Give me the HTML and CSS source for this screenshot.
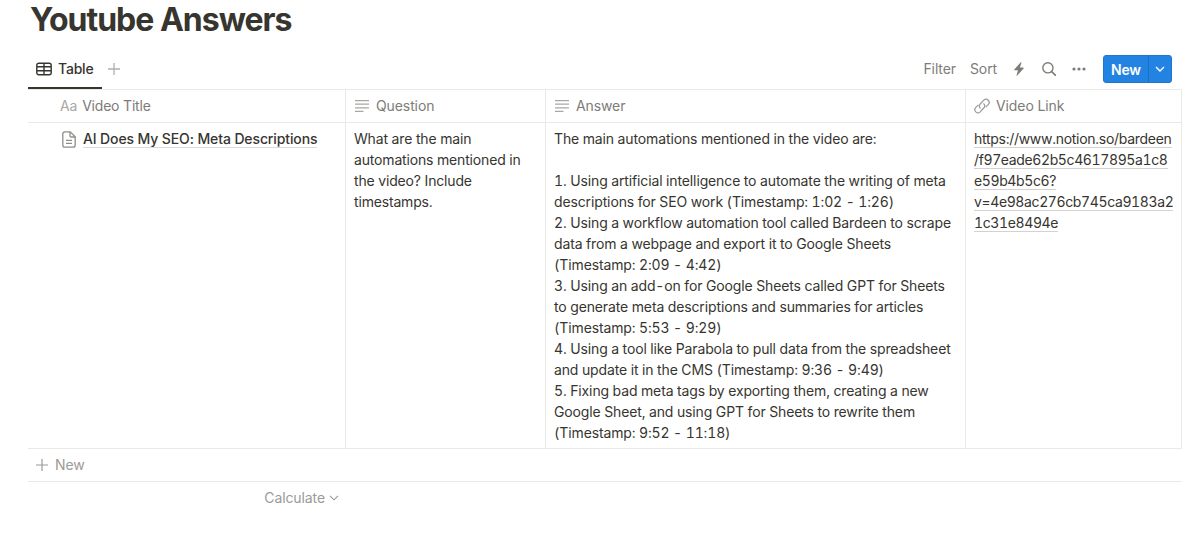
FILE: index.html
```
<!DOCTYPE html>
<html lang="en">
<head>
    <meta charset="UTF-8">
    <meta name="viewport" content="width=device-width, initial-scale=1.0">
    <title>Youtube Answers</title>
    <link rel="stylesheet" href="styles.css">
</head>
<body>

<div class="page">
    <h1>Youtube Answers</h1>

    <!-- View tabs and toolbar -->
    <div class="toolbar">
        <div class="tab">
            <svg width="16" height="14" viewBox="0 0 16 14" fill="none" stroke="currentColor" stroke-width="1.4">
                <rect x="0.8" y="1.2" width="14.4" height="11.6" rx="2"/>
                <path d="M1 4.8h14M1 8.8h14M8 1.2v11.6"/>
            </svg>
            <span class="tab-name">Table</span>
        </div>
        <svg class="add-view" width="12" height="12" viewBox="0 0 12 12" stroke="currentColor" stroke-width="1.3">
            <path d="M6 0v12M0 6h12"/>
        </svg>
        <div class="actions">
            <span class="filter">Filter</span>
            <span class="sort">Sort</span>
            <svg class="bolt" width="10" height="14" viewBox="0 0 10 14" fill="currentColor">
                <path d="M6.8 0.2L0.3 7.5q-.4.7.3.8H4L2.5 13.6q0 .5.5.2L9.6 6.4q.3-.7-.4-.8H5.9L7.5.6q0-.5-.7-.4z"/>
            </svg>
            <svg class="search" width="14" height="14" viewBox="0 0 14 14" fill="none" stroke="currentColor" stroke-width="1.4">
                <circle cx="5.9" cy="5.8" r="5.1"/>
                <path d="M9.6 9.5l3.7 3.7" stroke-width="1.7" stroke-linecap="round"/>
            </svg>
            <svg class="more" width="14" height="4" viewBox="0 0 14 4" fill="currentColor">
                <circle cx="2" cy="2" r="1.6"/><circle cx="7" cy="2" r="1.6"/><circle cx="12" cy="2" r="1.6"/>
            </svg>
            <div class="new-btn">
                <span class="new-label">New</span>
                <span class="new-arrow">
                    <svg width="10" height="6" viewBox="0 0 10 6" fill="none" stroke="currentColor" stroke-width="1.4">
                        <path d="M1 1l4 4 4-4"/>
                    </svg>
                </span>
            </div>
        </div>
    </div>

    <!-- Table -->
    <div class="table">
        <div class="cell head title-head">
            <span class="aa">Aa</span><span>Video Title</span>
        </div>
        <div class="cell head">
            <svg class="lines" width="14" height="12" viewBox="0 0 14 12" stroke="currentColor" stroke-width="1.3">
                <path d="M0 .6h14M0 4.2h14M0 7.8h14M0 11.3h8.5"/>
            </svg>
            <span>Question</span>
        </div>
        <div class="cell head">
            <svg class="lines" width="14" height="12" viewBox="0 0 14 12" stroke="currentColor" stroke-width="1.3">
                <path d="M0 .6h14M0 4.2h14M0 7.8h14M0 11.3h8.5"/>
            </svg>
            <span>Answer</span>
        </div>
        <div class="cell head">
            <svg class="link-icon" width="16" height="16" viewBox="0 0 16 16" fill="none" stroke="currentColor" stroke-width="1.2">
                <path d="M6.6 10.4C5 9.4 4.9 7.3 6.2 6L9.8 2.2a3.1 3.1 0 0 1 4.4 4.4L11.6 9.2"/>
                <path d="M9.4 5.6c1.6 1 1.7 3.1.4 4.4L6.2 13.8a3.1 3.1 0 0 1-4.4-4.4L4.4 6.8"/>
            </svg>
            <span>Video Link</span>
        </div>

        <div class="cell title-cell">
            <svg class="page-icon" width="14" height="17" viewBox="0 0 14 17" fill="none" stroke="currentColor" stroke-width="1.3">
                <path d="M3 .8h5.2l5 5V14a2.2 2.2 0 0 1-2.2 2.2H3A2.2 2.2 0 0 1 .8 14V3A2.2 2.2 0 0 1 3 .8z"/>
                <path d="M8 .8v4a1.2 1.2 0 0 0 1.2 1.2h4M4 9.3h6M4 12.3h6"/>
            </svg>
            <span class="title">AI Does My SEO: Meta Descriptions</span>
        </div>
        <div class="cell question">What are the main automations mentioned in the video? Include timestamps.</div>
        <div class="cell answer">The main automations mentioned in the video are:

1. Using artificial intelligence to automate the writing of meta descriptions for SEO work (Timestamp: 1:02 - 1:26)
2. Using a workflow automation tool called Bardeen to scrape data from a webpage and export it to Google Sheets (Timestamp: 2:09 - 4:42)
3. Using an add-on for Google Sheets called GPT for Sheets to generate meta descriptions and summaries for articles (Timestamp: 5:53 - 9:29)
4. Using a tool like Parabola to pull data from the spreadsheet and update it in the CMS (Timestamp: 9:36 - 9:49)
5. Fixing bad meta tags by exporting them, creating a new Google Sheet, and using GPT for Sheets to rewrite them (Timestamp: 9:52 - 11:18)</div>
        <div class="cell url"><a><span class="host">https://www.notion.so/bardeen</span><br>/f97eade62b5c4617895a1c8<br>e59b4b5c6?<br>v=4e98ac276cb745ca9183a2<br>1c31e8494e</a></div>
    </div>

    <div class="new-row">
        <svg width="12" height="12" viewBox="0 0 12 12" stroke="currentColor" stroke-width="1.2">
            <path d="M6 0v12M0 6h12"/>
        </svg>
        <span>New</span>
    </div>
    <div class="calculate">
        <span>Calculate</span>
        <svg width="10" height="6" viewBox="0 0 10 6" fill="none" stroke="currentColor" stroke-width="1.1">
            <path d="M1 .8l4 4 4-4"/>
        </svg>
    </div>
</div>

</body>
</html>
```
FILE: styles.css
```
body {
    margin: 0;
    background: #fff;
    font-family: Inter, "Liberation Sans", sans-serif;
    font-size: 14px;
    line-height: 21px;
    letter-spacing: -0.1px;
    color: #37352f;
    overflow: hidden;
}
svg {
    display: block;
    flex-shrink: 0;
}
.page {
    padding-left: 28px;
}
h1 {
    margin: 0;
    padding-left: 2px;
    height: 49px;
    font-size: 32px;
    line-height: 40px;
    font-weight: 700;
    letter-spacing: -1px;
}
.toolbar {
    display: flex;
    align-items: center;
    height: 40px;
    border-bottom: 1px solid #e9e9e7;
}
.tab {
    display: flex;
    align-items: center;
    box-sizing: border-box;
    width: 74px;
    height: 40px;
    padding: 1px 0 0 8px;
    border-bottom: 2px solid #37352f;
}
.tab-name {
    margin-left: 6px;
    font-weight: 500;
    letter-spacing: -0.2px;
}
.add-view {
    margin-left: 6px;
    color: #b0afac;
}
.actions {
    display: flex;
    align-items: center;
    margin-left: auto;
    margin-right: 10px;
    color: #7d7c78;
}
.filter,
.sort {
    padding-bottom: 2px;
}
.sort {
    margin-left: 14px;
}
.bolt {
    margin-left: 17px;
}
.search {
    margin-left: 18px;
}
.more {
    margin-left: 16px;
}
.new-btn {
    display: flex;
    box-sizing: border-box;
    width: 69px;
    height: 28px;
    margin-left: 17px;
    border: 1px solid #1f76cb;
    border-radius: 3px;
    background: #2383e2;
    color: #fff;
}
.new-label {
    width: 44px;
    text-align: center;
    line-height: 28px;
    font-weight: 600;
    letter-spacing: -0.2px;
    border-right: 1px solid #1c6fc0;
}
.new-arrow {
    flex: 1;
    display: flex;
    align-items: center;
    justify-content: center;
}
.table {
    display: grid;
    grid-template-columns: 318px 200px 420px 216px;
    grid-template-rows: 33px 326px;
}
.cell {
    box-sizing: border-box;
    padding: 5px 8px 0;
    border-right: 1px solid #e9e9e7;
    border-bottom: 1px solid #e9e9e7;
}
.head {
    display: flex;
    align-items: center;
    padding-top: 0;
    color: #7d7c78;
}
.head span {
    padding-bottom: 1px;
}
.title-head {
    padding-left: 32px;
}
.title-head span {
    letter-spacing: -0.2px;
}
.aa {
    margin-right: 5px;
    color: #a9a8a5;
}
.lines {
    margin: 0 7px 0 1px;
    color: #a9a8a5;
}
.link-icon {
    margin-right: 6px;
    color: #9b9a97;
}
.title-cell {
    display: flex;
    align-items: flex-start;
    padding-left: 34px;
}
.page-icon {
    margin: 3px 7px 0 0;
    color: #8f8e8a;
}
.title {
    font-weight: 500;
    line-height: 17px;
    margin-top: 2px;
    letter-spacing: -0.12px;
    border-bottom: 1px solid #dcdbd9;
}
.question {
    letter-spacing: -0.17px;
}
.answer {
    white-space: pre-wrap;
    letter-spacing: -0.13px;
    font-variant-numeric: tabular-nums;
}
.url {
    letter-spacing: -0.38px;
    font-variant-numeric: tabular-nums;
}
.url a {
    border-bottom: 1px solid #d3d2d0;
}
.host {
    letter-spacing: -0.28px;
}
.new-row {
    display: flex;
    align-items: center;
    height: 32px;
    padding-left: 8px;
    border-bottom: 1px solid #e9e9e7;
    color: #9b9a97;
}
.new-row span {
    margin-left: 7px;
    padding-bottom: 2px;
}
.calculate {
    display: flex;
    align-items: center;
    justify-content: flex-end;
    width: 311px;
    height: 32px;
    color: #9b9a97;
}
.calculate span {
    padding-bottom: 2px;
}
.calculate svg {
    margin-left: 4px;
}
```
